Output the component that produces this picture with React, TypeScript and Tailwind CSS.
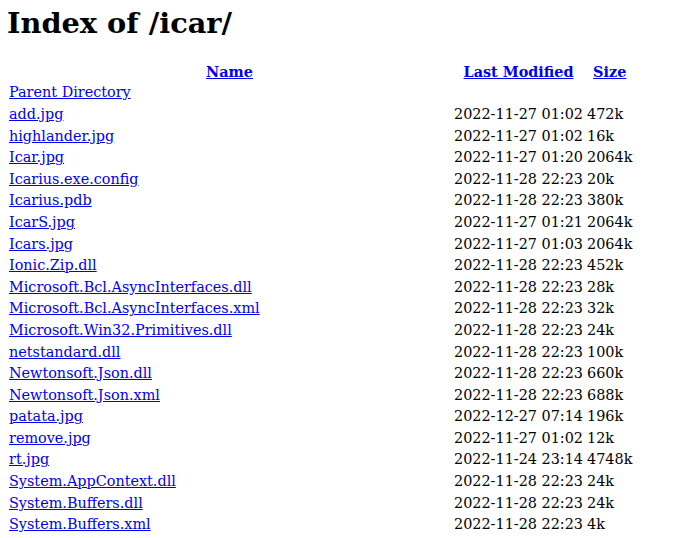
const files: [string, string, string][] = [
  ["add.jpg", "2022-11-27 01:02", "472k"],
  ["highlander.jpg", "2022-11-27 01:02", "16k"],
  ["Icar.jpg", "2022-11-27 01:20", "2064k"],
  ["Icarius.exe.config", "2022-11-28 22:23", "20k"],
  ["Icarius.pdb", "2022-11-28 22:23", "380k"],
  ["IcarS.jpg", "2022-11-27 01:21", "2064k"],
  ["Icars.jpg", "2022-11-27 01:03", "2064k"],
  ["Ionic.Zip.dll", "2022-11-28 22:23", "452k"],
  ["Microsoft.Bcl.AsyncInterfaces.dll", "2022-11-28 22:23", "28k"],
  ["Microsoft.Bcl.AsyncInterfaces.xml", "2022-11-28 22:23", "32k"],
  ["Microsoft.Win32.Primitives.dll", "2022-11-28 22:23", "24k"],
  ["netstandard.dll", "2022-11-28 22:23", "100k"],
  ["Newtonsoft.Json.dll", "2022-11-28 22:23", "660k"],
  ["Newtonsoft.Json.xml", "2022-11-28 22:23", "688k"],
  ["patata.jpg", "2022-12-27 07:14", "196k"],
  ["remove.jpg", "2022-11-27 01:02", "12k"],
  ["rt.jpg", "2022-11-24 23:14", "4748k"],
  ["System.AppContext.dll", "2022-11-28 22:23", "24k"],
  ["System.Buffers.dll", "2022-11-28 22:23", "24k"],
  ["System.Buffers.xml", "2022-11-28 22:23", "4k"],
];

const link = "text-[#0000ee] underline";
const cell = "p-[1px] h-[19.6px] leading-[17px] align-middle";

export default function App() {
  return (
    <div className="h-[538px] overflow-hidden bg-white px-[7px] pt-[6px] text-[14.4px] text-black font-['DejaVu_Serif',serif]">
      <h1 className="text-[28.8px] font-bold leading-[35px] mb-[18.5px]">Index of /icar/</h1>
      <table className="border-separate border-spacing-[2px] -ml-[1px]">
        <thead>
          <tr>
            <th className={`${cell} w-[443px] text-center font-bold`}>
              <a href="#" className={link}>Name</a>
            </th>
            <th className={`${cell} text-center font-bold`}>
              <a href="#" className={link}>Last Modified</a>
            </th>
            <th className={`${cell} text-center font-bold`}>
              <a href="#" className={link}>Size</a>
            </th>
          </tr>
        </thead>
        <tbody>
          <tr>
            <td className={cell}>
              <a href="#" className={link}>Parent Directory</a>
            </td>
            <td className={cell}></td>
            <td className={cell}></td>
          </tr>
          {files.map(([name, date, size]) => (
            <tr key={name}>
              <td className={cell}>
                <a href="#" className={link}>{name}</a>
              </td>
              <td className={`${cell} whitespace-nowrap`}>{date}</td>
              <td className={cell}>{size}</td>
            </tr>
          ))}
        </tbody>
      </table>
    </div>
  );
}
